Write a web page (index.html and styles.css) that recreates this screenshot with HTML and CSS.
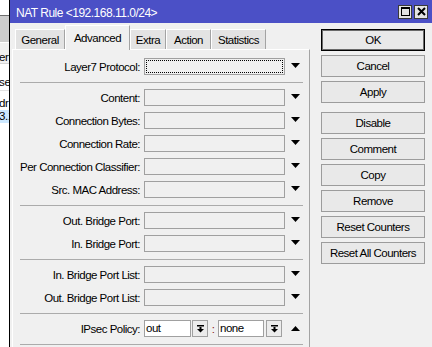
FILE: index.html
```html
<!DOCTYPE html>
<html>
<head>
<meta charset="utf-8">
<link rel="stylesheet" href="styles.css">
</head>
<body>
<div class="desk">
  <div class="bgwin">
    <div class="bg-top"></div>
    <div class="bg-head"></div>
    <div class="bg-row r1">erv</div>
    <div class="bg-row r2">se</div>
    <div class="bg-row r3">dr</div>
    <div class="bg-row r4">3.1</div>
  </div>
  <div class="win">
    <div class="titlebar">
      <span class="title">NAT Rule &lt;192.168.11.0/24&gt;</span>
      <div class="tb-btns">
        <span class="tb-btn"><svg width="9" height="9" viewBox="0 0 9 9"><rect x="0.5" y="0.5" width="8" height="8" fill="none" stroke="#000"/><rect x="0" y="0" width="9" height="2" fill="#000"/></svg></span>
        <span class="tb-btn"><svg width="9" height="9" viewBox="0 0 9 9"><path d="M1 1L8 8M8 1L1 8" stroke="#000" stroke-width="2"/></svg></span>
      </div>
    </div>
    <div class="winbody">
      <div class="leftcol">
        <div class="tabs">
          <div class="tab w-general">General</div>
          <div class="tab active w-adv">Advanced</div>
          <div class="tab w-extra">Extra</div>
          <div class="tab w-action">Action</div>
          <div class="tab w-stats">Statistics</div>
        </div>
        <div class="panel">
          <div class="row">
            <span class="lbl">Layer7 Protocol:</span>
            <span class="field focus"></span>
            <span class="arrow"><svg width="9" height="5" viewBox="0 0 9 5"><polygon points="0,0 9,0 4.5,5" fill="#000"/></svg></span>
          </div>
          <div class="sep"></div>
          <div class="row">
            <span class="lbl">Content:</span>
            <span class="field"></span>
            <span class="arrow"><svg width="9" height="5" viewBox="0 0 9 5"><polygon points="0,0 9,0 4.5,5" fill="#000"/></svg></span>
          </div>
          <div class="row">
            <span class="lbl">Connection Bytes:</span>
            <span class="field"></span>
            <span class="arrow"><svg width="9" height="5" viewBox="0 0 9 5"><polygon points="0,0 9,0 4.5,5" fill="#000"/></svg></span>
          </div>
          <div class="row">
            <span class="lbl">Connection Rate:</span>
            <span class="field"></span>
            <span class="arrow"><svg width="9" height="5" viewBox="0 0 9 5"><polygon points="0,0 9,0 4.5,5" fill="#000"/></svg></span>
          </div>
          <div class="row">
            <span class="lbl">Per Connection Classifier:</span>
            <span class="field"></span>
            <span class="arrow"><svg width="9" height="5" viewBox="0 0 9 5"><polygon points="0,0 9,0 4.5,5" fill="#000"/></svg></span>
          </div>
          <div class="row">
            <span class="lbl">Src. MAC Address:</span>
            <span class="field"></span>
            <span class="arrow"><svg width="9" height="5" viewBox="0 0 9 5"><polygon points="0,0 9,0 4.5,5" fill="#000"/></svg></span>
          </div>
          <div class="sep"></div>
          <div class="row">
            <span class="lbl">Out. Bridge Port:</span>
            <span class="field"></span>
            <span class="arrow"><svg width="9" height="5" viewBox="0 0 9 5"><polygon points="0,0 9,0 4.5,5" fill="#000"/></svg></span>
          </div>
          <div class="row">
            <span class="lbl">In. Bridge Port:</span>
            <span class="field"></span>
            <span class="arrow"><svg width="9" height="5" viewBox="0 0 9 5"><polygon points="0,0 9,0 4.5,5" fill="#000"/></svg></span>
          </div>
          <div class="sep"></div>
          <div class="row">
            <span class="lbl">In. Bridge Port List:</span>
            <span class="field"></span>
            <span class="arrow"><svg width="9" height="5" viewBox="0 0 9 5"><polygon points="0,0 9,0 4.5,5" fill="#000"/></svg></span>
          </div>
          <div class="row">
            <span class="lbl">Out. Bridge Port List:</span>
            <span class="field"></span>
            <span class="arrow"><svg width="9" height="5" viewBox="0 0 9 5"><polygon points="0,0 9,0 4.5,5" fill="#000"/></svg></span>
          </div>
          <div class="sep"></div>
          <div class="row">
            <span class="lbl">IPsec Policy:</span>
            <span class="ipsec">
              <span class="ip-field w1">out</span>
              <span class="ip-btn"><svg width="7" height="8" viewBox="0 0 7 8"><rect x="0" y="0" width="7" height="1.5" fill="#000"/><rect x="2.5" y="2" width="2" height="2" fill="#000"/><polygon points="0,4 7,4 3.5,7.5" fill="#000"/></svg></span>
              <span class="ip-colon">:</span>
              <span class="ip-field w2">none</span>
              <span class="ip-btn b2"><svg width="7" height="8" viewBox="0 0 7 8"><rect x="0" y="0" width="7" height="1.5" fill="#000"/><rect x="2.5" y="2" width="2" height="2" fill="#000"/><polygon points="0,4 7,4 3.5,7.5" fill="#000"/></svg></span>
            </span>
            <span class="arrow up"><svg width="9" height="5" viewBox="0 0 9 5"><polygon points="0,5 9,5 4.5,0" fill="#000"/></svg></span>
          </div>
          <div class="sep"></div>
        </div>
      </div>
      <div class="btncol">
        <div class="btn default">OK</div>
        <div class="btn">Cancel</div>
        <div class="btn">Apply</div>
        <div class="btn group">Disable</div>
        <div class="btn">Comment</div>
        <div class="btn">Copy</div>
        <div class="btn">Remove</div>
        <div class="btn">Reset Counters</div>
        <div class="btn">Reset All Counters</div>
      </div>
    </div>
  </div>
</div>
</body>
</html>
```
FILE: styles.css
```css
html, body {
  margin: 0;
  padding: 0;
  height: 100%;
  overflow: hidden;
}
body {
  font-family: "Liberation Sans", Arial, sans-serif;
  font-size: 11.5px;
  letter-spacing: -0.5px;
  color: #000;
  background: #fff;
}
.desk {
  display: flex;
  height: 347px;
}

/* background window strip */
.bgwin {
  width: 9px;
  flex: none;
  overflow: hidden;
  display: flex;
  flex-direction: column;
  background: #fff;
}
.bg-top {
  height: 15px;
  border-bottom: 1px solid #6e6e6e;
  background: #fff;
}
.bg-head {
  height: 26px;
  background: #cdcdcd;
  border-bottom: 1px solid #fff;
}
.bg-row {
  white-space: nowrap;
  margin-left: -1px;
  line-height: 13px;
  letter-spacing: -0.3px;
}
.r1 {
  height: 21px;
  padding-top: 8px;
  box-sizing: border-box;
  background: #f0f0f0;
  border-bottom: 1px solid #d5d5d5;
}
.r2 {
  height: 27px;
  padding-top: 12px;
  box-sizing: border-box;
  border-bottom: 1px solid #e2e2e2;
}
.r3 {
  height: 19px;
  padding-top: 6px;
  box-sizing: border-box;
}
.r4 {
  height: 13px;
  line-height: 13px;
  background: #cce8ff;
}

/* main window */
.win {
  flex: 1;
  border-left: 1px solid #000;
  display: flex;
  flex-direction: column;
  min-width: 0;
}
.titlebar {
  height: 23px;
  flex: none;
  background: #4b50c6;
  color: #fff;
  display: flex;
  align-items: center;
  justify-content: space-between;
  padding: 0 4px 0 6px;
}
.title {
  font-size: 12px;
  letter-spacing: -0.5px;
  padding-top: 3px;
}
.tb-btns {
  display: flex;
  gap: 2px;
}
.tb-btn {
  width: 14px;
  height: 14px;
  box-sizing: border-box;
  border: 1px solid #3a3a3a;
  background: #e4e4e4;
  display: flex;
  align-items: center;
  justify-content: center;
}

.winbody {
  flex: 1;
  display: flex;
  background: #f0f0f0;
  min-height: 0;
}
.leftcol {
  width: 298px;
  margin-left: 2px;
  display: flex;
  flex-direction: column;
  flex: none;
}
.tabs {
  display: flex;
  align-items: flex-end;
  height: 24px;
  margin-top: 2px;
  padding-left: 3px;
  flex: none;
}
.tab {
  height: 20px;
  box-sizing: border-box;
  border-top: 1px solid #fff;
  border-left: 1px solid #fff;
  border-right: 1px solid #a3a3a3;
  background: #e3e3e3;
  display: flex;
  align-items: center;
  justify-content: center;
  white-space: nowrap;
}
.tab.active {
  height: 25px;
  margin-bottom: -1px;
  background: #f0f0f0;
  position: relative;
  z-index: 1;
  padding-bottom: 1px;
}
.w-general { width: 50px; }
.w-adv { width: 65px; }
.w-extra { width: 36px; }
.w-action { width: 45px; }
.w-stats { width: 55px; }

.panel {
  flex: 1;
  border-top: 1px solid #fff;
  border-left: 1px solid #fff;
  border-right: 1px solid #a3a3a3;
  padding-top: 8px;
  display: flex;
  flex-direction: column;
  gap: 6px;
}
.row {
  display: grid;
  grid-template-columns: 127px 141px 1fr;
  column-gap: 4px;
  height: 17px;
  align-items: center;
}
.lbl {
  text-align: right;
  white-space: nowrap;
}
.field {
  height: 17px;
  box-sizing: border-box;
  border: 1px solid #a0a0a0;
  background: #f0f0f0;
}
.field.focus {
  outline: 1px dotted #000;
  outline-offset: -3px;
}
.arrow {
  padding-left: 2px;
  display: flex;
  align-items: center;
  margin-bottom: 2px;
}
.arrow.up {
  margin-bottom: 0;
}
.sep {
  height: 1px;
  background: #ababab;
  margin: 1px 6px 0 7px;
  flex: none;
}

.ipsec {
  display: flex;
  align-items: center;
  height: 17px;
}
.ip-field {
  height: 17px;
  box-sizing: border-box;
  border: 1px solid #a0a0a0;
  background: #fff;
  padding-left: 1px;
  line-height: 15px;
}
.ip-field.w1 { width: 47px; }
.ip-field.w2 { width: 46px; }
.ip-btn {
  width: 16px;
  height: 17px;
  box-sizing: border-box;
  margin-left: 1px;
  border: 1px solid #a0a0a0;
  background: #ececec;
  display: flex;
  align-items: center;
  justify-content: center;
}
.ip-btn.b2 { margin-left: 2px; }
.ip-colon {
  width: 10px;
  text-align: center;
  color: #8b1a1a;
}

.btncol {
  width: 104px;
  margin-left: 11px;
  padding-top: 6px;
  display: flex;
  flex-direction: column;
  gap: 4px;
  flex: none;
}
.btn {
  height: 22px;
  box-sizing: border-box;
  border: 1px solid #9c9c9c;
  background: #e9e9e9;
  display: flex;
  align-items: center;
  justify-content: center;
  white-space: nowrap;
}
.btn.default {
  border-color: #000;
  box-shadow: inset 0 0 0 1px #6a6a6a;
}
.btn.group {
  margin-top: 5px;
}
```
